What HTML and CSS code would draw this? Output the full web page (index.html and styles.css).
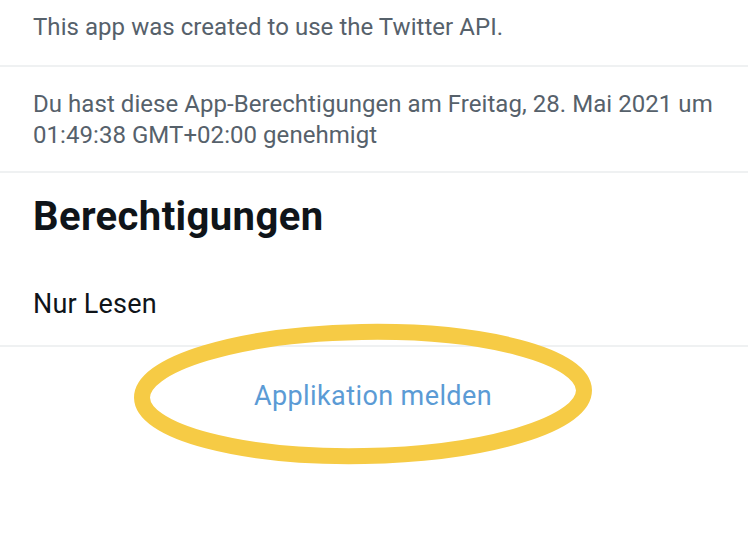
FILE: index.html
```html
<!DOCTYPE html>
<html>
<head>
<meta charset="utf-8">
<link rel="stylesheet" href="styles.css">
</head>
<body>
<div class="page">
  <section class="row row-first">
    <p class="muted">This app was created to use the Twitter API.</p>
  </section>
  <section class="row row-second">
    <p class="muted">Du hast diese App-Berechtigungen am Freitag, 28. Mai 2021 um<br>01:49:38 GMT+02:00 genehmigt</p>
  </section>
  <section class="row row-perm">
    <h2 class="heading">Berechtigungen</h2>
    <p class="plain">Nur Lesen</p>
  </section>
  <div class="report">
    <a class="report-link">Applikation melden</a>
    <svg class="marker" width="470" height="150" viewBox="0 0 470 150">
      <ellipse cx="235" cy="71" rx="221" ry="62" fill="none" stroke="#f6cb45" stroke-width="16" transform="rotate(-1 235 71)"/>
    </svg>
  </div>
</div>
</body>
</html>
```
FILE: styles.css
```css
html, body {
  margin: 0;
  padding: 0;
  background: #ffffff;
}
body {
  font-family: Roboto, "Liberation Sans", sans-serif;
  width: 750px;
  height: 536px;
  overflow: hidden;
}
.page {
  width: 748px;
}
.row {
  border-bottom: 2px solid #eff1f2;
  padding: 0 33px;
}
.row-first {
  height: 65px;
}
.row-first .muted {
  margin: 0;
  padding-top: 12px;
}
.row-second {
  height: 104px;
}
.row-second .muted {
  margin: 0;
  padding-top: 22px;
}
.muted {
  color: #56616b;
  font-size: 24px;
  line-height: 31px;
  letter-spacing: 0.05px;
}
.row-perm {
  height: 172px;
}
.heading {
  margin: 0;
  padding-top: 21px;
  font-size: 40px;
  line-height: 46px;
  font-weight: 700;
  color: #0f1419;
  letter-spacing: 0.4px;
}
.plain {
  margin: 0;
  padding-top: 48px;
  font-size: 27px;
  line-height: 32px;
  color: #0f1419;
  letter-spacing: 0.2px;
}
.report {
  position: relative;
  display: flex;
  justify-content: center;
  padding-top: 29px;
  padding-right: 2px;
}
.report-link {
  color: #5b9bd5;
  font-size: 27px;
  line-height: 40px;
  letter-spacing: 0.4px;
}
.marker {
  position: absolute;
  left: 128px;
  top: -24px;
}
```
